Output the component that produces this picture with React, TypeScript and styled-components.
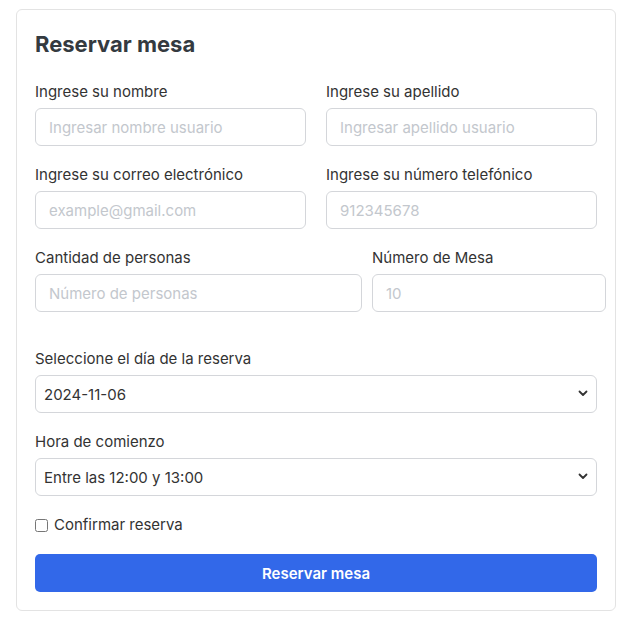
import React from "react";
import styled, { createGlobalStyle } from "styled-components";

const Global = createGlobalStyle`
  html, body { margin: 0; padding: 0; background: #ffffff; }
  body { font-family: Inter, "Noto Sans", "Liberation Sans", sans-serif; color: #333333; }
  * { box-sizing: border-box; }
`;

const Page = styled.div`
  padding: 9px 17px 16px 16px;
`;

const Card = styled.form`
  width: 600px;
  border: 1px solid #e3e3e3;
  border-radius: 6px;
  padding: 18px;
  background: #fff;
`;

const Title = styled.h2`
  margin: 0 0 21px;
  font-size: 22px;
  line-height: 32px;
  font-weight: 700;
  color: #343a40;
`;

const Row = styled.div<{ $cols: string; $gap: number }>`
  display: grid;
  grid-template-columns: ${(p) => p.$cols};
  column-gap: ${(p) => p.$gap}px;
`;

const Field = styled.div<{ $top?: number }>`
  margin-top: ${(p) => p.$top ?? 0}px;
  margin-bottom: 18px;
`;

const Label = styled.label`
  display: block;
  font-size: 15px;
  line-height: 22px;
  margin-bottom: 5px;
  color: #333333;
`;

const Input = styled.input`
  display: block;
  width: 100%;
  height: 38px;
  border: 1px solid #d4d6da;
  border-radius: 6px;
  padding: 0 13px;
  font-family: inherit;
  font-size: 15px;
  color: #333;
  background: #fff;
  outline: none;
  &::placeholder { color: #c3c7cd; }
`;

const SelectWrap = styled.div`
  position: relative;
`;

const Select = styled.select`
  display: block;
  width: 100%;
  height: 38px;
  appearance: none;
  -webkit-appearance: none;
  border: 1px solid #d4d6da;
  border-radius: 6px;
  padding: 0 30px 0 8px;
  font-family: inherit;
  font-size: 15px;
  color: #333;
  background: #fff;
  outline: none;
`;

const Chevron = styled.svg`
  position: absolute;
  right: 9px;
  top: 15px;
  pointer-events: none;
`;

const CheckRow = styled.label`
  display: flex;
  align-items: center;
  margin-top: 0;
  font-size: 15px;
  line-height: 22px;
  color: #333;
`;

const Check = styled.input`
  width: 13px;
  height: 13px;
  margin: 0 6px 0 0;
`;

const Button = styled.button`
  display: block;
  width: 100%;
  height: 38px;
  margin-top: 18px;
  border: none;
  border-radius: 5px;
  background: #3268e9;
  color: #fff;
  font-family: inherit;
  font-size: 15px;
  font-weight: 600;
`;

function Dropdown({ value }: { value: string }) {
  return (
    <SelectWrap>
      <Select defaultValue={value}>
        <option value={value}>{value}</option>
      </Select>
      <Chevron width="10" height="7" viewBox="0 0 10 7">
        <path d="M1.5 1.5 L5 5 L8.5 1.5" fill="none" stroke="#333" strokeWidth="1.8" strokeLinecap="round" strokeLinejoin="round" />
      </Chevron>
    </SelectWrap>
  );
}

export default function App() {
  return (
    <>
      <Global />
      <Page>
        <Card onSubmit={(e) => e.preventDefault()}>
          <Title>Reservar mesa</Title>
          <Row $cols="271px 271px" $gap={20}>
            <Field>
              <Label>Ingrese su nombre</Label>
              <Input placeholder="Ingresar nombre usuario" />
            </Field>
            <Field>
              <Label>Ingrese su apellido</Label>
              <Input placeholder="Ingresar apellido usuario" />
            </Field>
          </Row>
          <Row $cols="271px 271px" $gap={20}>
            <Field>
              <Label>Ingrese su correo electrónico</Label>
              <Input placeholder="example@gmail.com" />
            </Field>
            <Field>
              <Label>Ingrese su número telefónico</Label>
              <Input placeholder="912345678" />
            </Field>
          </Row>
          <Row $cols="327px 234px" $gap={10}>
            <Field>
              <Label>Cantidad de personas</Label>
              <Input placeholder="Número de personas" />
            </Field>
            <Field>
              <Label>Número de Mesa</Label>
              <Input placeholder="10" />
            </Field>
          </Row>
          <Field $top={18}>
            <Label>Seleccione el día de la reserva</Label>
            <Dropdown value="2024-11-06" />
          </Field>
          <Field>
            <Label>Hora de comienzo</Label>
            <Dropdown value="Entre las 12:00 y 13:00" />
          </Field>
          <CheckRow>
            <Check type="checkbox" />
            Confirmar reserva
          </CheckRow>
          <Button type="submit">Reservar mesa</Button>
        </Card>
      </Page>
    </>
  );
}
